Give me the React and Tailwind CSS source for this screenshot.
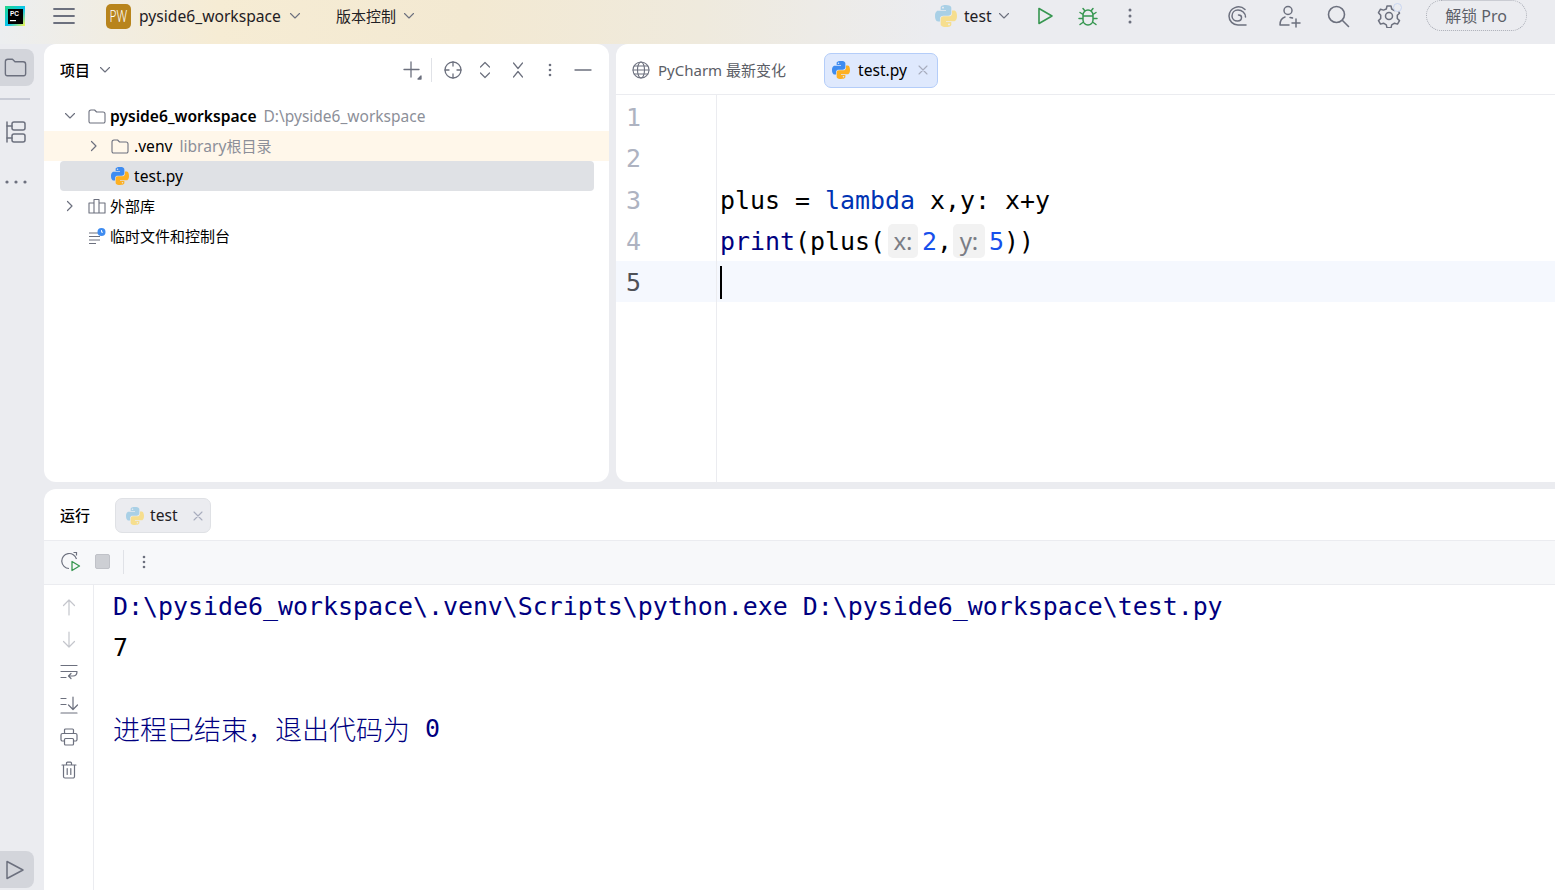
import React from "react";

const UI = { fontFamily: "'Noto Sans', 'Noto Sans CJK SC', sans-serif" };

function Py({ size = 18, faded = false }) {
  return (
    <svg width={size} height={size} viewBox="0 0 24 24" className="shrink-0">
      <path fill={faded ? "#a9d0e6" : "#3f8cf0"} d="M11.914 0C5.82 0 6.2 2.656 6.2 2.656l.007 2.752h5.814v.826H3.9S0 5.789 0 11.969c0 6.18 3.403 5.96 3.403 5.96h2.03v-2.867s-.109-3.42 3.35-3.42h5.766s3.24.052 3.24-3.148V3.202S18.28 0 11.913 0zM8.708 1.85c.578 0 1.046.47 1.046 1.052 0 .581-.468 1.051-1.046 1.051-.579 0-1.046-.47-1.046-1.051 0-.582.467-1.052 1.046-1.052z" />
      <path fill={faded ? "#f6de8e" : "#fdb022"} d="M12.087 24c6.092 0 5.712-2.656 5.712-2.656l-.007-2.752h-5.814v-.826h8.123s3.9.445 3.9-5.735c0-6.18-3.404-5.96-3.404-5.96h-2.03v2.867s.109 3.42-3.35 3.42H9.452s-3.24-.052-3.24 3.148v5.292S5.72 24 12.087 24zm3.206-1.85c-.578 0-1.046-.47-1.046-1.052 0-.581.468-1.051 1.046-1.051.579 0 1.046.47 1.046 1.051 0 .582-.467 1.052-1.046 1.052z" />
    </svg>
  );
}

function I({ w = 20, h = 20, vb, c = "#6c707e", sw = 1.4, children, className = "" }) {
  return (
    <svg width={w} height={h} viewBox={vb || `0 0 ${w} ${h}`} fill="none" stroke={c} strokeWidth={sw} strokeLinecap="round" strokeLinejoin="round" className={"shrink-0 " + className}>
      {children}
    </svg>
  );
}

const Chevron = ({ c = "#6c707e", w = 12 }) => (
  <I w={w} h={8} vb="0 0 12 8" c={c} sw={1.1}><path d="M1.5 1.5 6 6l4.5-4.5" /></I>
);
const ChevronR = () => (
  <I w={8} h={12} vb="0 0 8 12" sw={1.2}><path d="M1.5 1.5 6 6l-4.5 4.5" /></I>
);
const Folder = ({ w = 18, h = 15, c = "#6c707e", sw = 1.1 }) => (
  <I w={w} h={h} vb="0 0 18 15" c={c} sw={sw}>
    <path d="M1 3a2 2 0 0 1 2-2h3.6l2 2H15a2 2 0 0 1 2 2v7.5a1.5 1.5 0 0 1-1.5 1.5h-13A1.5 1.5 0 0 1 1 12.5z" />
  </I>
);
const Close = ({ c = "#a8adbd" }) => (
  <I w={10} h={10} c={c} sw={1.1}><path d="M1 1l8 8M9 1l-8 8" /></I>
);

function Row({ tint, selected, deep, low, chevron, icon, children }) {
  const pl = deep ? (selected ? 25 : 41) : 17;
  return (
    <div className={"h-[30px] flex items-center " + (tint ? "bg-[#fff7ea] " : "") + (selected ? "bg-[#dfe1e5] rounded-[4px] ml-4 mr-[15px] " : "")} style={{ paddingLeft: pl }}>
      <div className="w-[18px] flex items-center justify-center shrink-0">{chevron}</div>
      <div className={"flex items-center shrink-0 " + (deep ? "w-[23px] ml-[8px]" : "w-[22px] ml-[9px]")}>{icon}</div>
      <div className={"flex items-baseline text-[15px] text-[#000] whitespace-nowrap " + (low ? "mt-[2px]" : "")}>{children}</div>
    </div>
  );
}

function Code({ children, className = "" }) {
  return <span className={className}>{children}</span>;
}

const MONO = { fontFamily: "'DejaVu Sans Mono', monospace" };

export default function App() {
  return (
    <div className="w-[1555px] h-[890px] overflow-hidden flex flex-col bg-[#ebecf0]" style={UI}>
      {/* title bar */}
      <div className="h-[44px] shrink-0 flex items-start bg-[linear-gradient(90deg,#eceef0_0%,#f6ecd4_14%,#f3e9d2_30%,#efeadd_45%,#ebecf0_60%)]">
        <div className="h-[32px] w-full flex items-center">
          <svg width="20" height="20" viewBox="0 0 20 20" className="ml-[5px] shrink-0">
            <defs>
              <linearGradient id="pc" x1="0" y1="0" x2="1" y2="1">
                <stop offset="0" stopColor="#21d789" />
                <stop offset="0.55" stopColor="#07c3f2" />
                <stop offset="1" stopColor="#fcf84a" />
              </linearGradient>
            </defs>
            <rect width="20" height="20" fill="url(#pc)" />
            <rect x="3" y="3" width="15" height="15" fill="#000" />
            <text x="5" y="10" fontSize="6.5" fontFamily="Liberation Sans" fontWeight="700" fill="#fff">PC</text>
            <rect x="5" y="14" width="6" height="1.2" fill="#fff" />
          </svg>
          <I w={22} h={18} vb="0 0 22 18" c="#6c707e" sw={1.8} className="ml-[28px]"><path d="M1 2h20M1 9h20M1 16h20" /></I>
          <div className="ml-[31px] w-[25px] h-[25px] rounded-[5px] bg-[#b8841c] flex items-center justify-center text-white text-[16.5px] font-light shrink-0">
            <span className="inline-block scale-x-[0.72]">PW</span>
          </div>
          <span className="ml-[8px] mt-[2px] text-[15.65px] text-[#1f2024]">pyside6_workspace</span>
          <span className="ml-[8px]"><Chevron /></span>
          <span className="ml-[35px] text-[15px] text-[#1f2024]">版本控制</span>
          <span className="ml-[7px]"><Chevron /></span>

          <span className="ml-[520px]"><Py size={22} faded /></span>
          <span className="ml-[7px] mt-[2px] text-[15.65px] text-[#1f2024]">test</span>
          <span className="ml-[5px]"><Chevron w={14} /></span>
          <I w={18} h={20} vb="0 0 18 20" c="#369650" sw={1.6} className="ml-[25px]"><path d="M3 2.5v15L16 10z" /></I>
          <I w={22} h={22} vb="0 0 22 22" c="#369650" sw={1.5} className="ml-[23px]">
            <path d="M6 10a5 5 0 0 1 10 0v5a5 5 0 0 1-10 0zM6 11h10M8 6 6 3.500M14 6l2-2.500M6 13.500H2M16 13.500h4M6 9.500 3 7.500M16 9.500l3-2M6.500 17 3 19.500M15.500 17 19 19.500" />
          </I>
          <svg width="4" height="16" viewBox="0 0 4 16" className="ml-[29px] shrink-0" fill="#6c707e"><circle cx="2" cy="2" r="1.5" /><circle cx="2" cy="8" r="1.5" /><circle cx="2" cy="14" r="1.5" /></svg>
          <I w={22} h={22} vb="0 0 22 22" c="#6c707e" sw={1.5} className="ml-[95px]">
            <path d="M18 4.500A9.500 9.500 0 0 0 2 11c0 5 4 9 9 9h8" />
            <path d="M18.500 12c0-4-3.500-7-7.500-7-3.500 0-6 2.500-6 6 0 3 2.500 5 5.500 5 2.500 0 4-1.500 4-3.500 0-1.500-1.200-2.500-3-2.500" />
          </I>
          <I w={24} h={24} vb="0 0 24 24" c="#6c707e" sw={1.5} className="ml-[29px]">
            <circle cx="10" cy="6.500" r="4" /><path d="M2 21c0-4 1.500-7 5-8M12 13.500c1 0 2 .2 2.500.5M2 21h9M18 15v8M14 19h8" />
          </I>
          <I w={24} h={24} vb="0 0 24 24" c="#6c707e" sw={1.6} className="ml-[24px]">
            <circle cx="10.500" cy="10.500" r="8" /><path d="M16.500 16.500 22.500 22.500" />
          </I>
          <span className="ml-[27px] relative flex">
            <I w={24} h={24} vb="0 0 24 24" c="#6c707e" sw={1.5}>
              <path d="M10 2h4l.7 3 2.800 1.600 3-.9 2 3.500-2.200 2.100v3.200l2.200 2.100-2 3.500-3-.9-2.800 1.600-.7 3h-4l-.7-3-2.800-1.600-3 .9-2-3.500 2.200-2.100v-3.200L1.500 8.700l2-3.500 3 .9L9.300 5z" /><circle cx="12" cy="12" r="3.500" />
            </I>
            <span className="absolute right-[-1px] top-[-1px] w-[9px] h-[9px] rounded-full border border-[#c9d6f2] bg-[#ebecf0]" />
          </span>
          <div className="ml-[25px] w-[101px] h-[31px] -mt-[1px] rounded-full border border-dotted border-[#a9acb5] flex items-center justify-center text-[16px] text-[#5c5f68] shrink-0">解锁 Pro</div>
        </div>
      </div>

      <div className="flex-1 flex min-h-0">
        {/* left strip */}
        <div className="w-[44px] shrink-0 flex flex-col pt-[5px]">
          <div className="w-[34px] h-[37px] rounded-r-[8px] bg-[#d3d5db] flex items-center pl-[4px]">
            <Folder w={23} h={19} sw={1.1} />
          </div>
          <div className="mt-[12px] w-[30px] h-[2px] bg-[#c9ccd6]" />
          <div className="mt-[20px] w-[31px] flex justify-center">
            <I w={22} h={24} vb="0 0 22 24" sw={1.5}><path d="M2 2v20" /><rect x="7" y="2" width="13" height="8" rx="2" /><rect x="7" y="14" width="13" height="8" rx="2" /><path d="M2 6h5M2 18h5" /></I>
          </div>
          <svg width="22" height="4" viewBox="0 0 22 4" className="mt-[36px] ml-[5px]" fill="#6c707e"><circle cx="2" cy="2" r="1.600" /><circle cx="11" cy="2" r="1.600" /><circle cx="20" cy="2" r="1.600" /></svg>
          <div className="mt-auto mb-[2px] w-[34px] h-[37px] rounded-r-[8px] bg-[#d3d5db] flex items-center pl-[5px]">
            <I w={20} h={22} vb="0 0 20 22" sw={1.5}><path d="M2 2.500v17L18 11z" /></I>
          </div>
        </div>

        {/* main */}
        <div className="flex-1 flex flex-col gap-[7px] min-w-0">
          <div className="h-[438px] shrink-0 flex gap-[7px]">
            {/* project panel */}
            <div className="w-[565px] shrink-0 bg-white rounded-[12px] overflow-hidden">
              <div className="h-[57px] flex items-center pl-[16px] pb-[5px]">
                <span className="text-[15px] font-medium text-[#000]">项目</span>
                <span className="ml-[9px]"><Chevron /></span>
                <I w={20} h={20} className="ml-auto" sw={1.3}><path d="M9 2v15M2 9.500h15" /><path d="M19 16v3h-3z" fill="#6c707e" /></I>
                <div className="ml-[9px] w-px h-[24px] bg-[#e0e2e7]" />
                <I w={20} h={20} className="ml-[11px]" sw={1.3}><circle cx="10" cy="10" r="8" /><path d="M10 2v4M10 14v4M2 10h4M14 10h4" /></I>
                <I w={12} h={20} vb="0 0 12 20" className="ml-[16px]" sw={1.2}><path d="M1.500 7 6 2.500 10.500 7M1.500 13 6 17.500 10.500 13" /></I>
                <I w={12} h={20} vb="0 0 12 20" className="ml-[21px]" sw={1.2}><path d="M1.500 3 6 8.500 10.500 3M1.500 17 6 11.500l4.500 5.500" /></I>
                <svg width="4" height="14" viewBox="0 0 4 14" className="ml-[24px] shrink-0" fill="#6c707e"><circle cx="2" cy="2" r="1.300" /><circle cx="2" cy="7" r="1.300" /><circle cx="2" cy="12" r="1.300" /></svg>
                <I w={18} h={4} vb="0 0 18 4" className="ml-[22px] mr-[17px]" sw={1.3}><path d="M1 2h16" /></I>
              </div>
              {/* tree */}
              <Row low chevron={<Chevron />} icon={<Folder />}>
                <span className="font-semibold text-[15.6px]">pyside6_workspace</span>
                <span className="ml-[7px] text-[15.5px] text-[#8c8f99]">D:\pyside6_workspace</span>
              </Row>
              <Row low tint deep chevron={<ChevronR />} icon={<Folder />}>
                <span className="text-[15.6px]">.venv</span>
                <span className="ml-[7px] text-[15.6px] text-[#8c8f99]">library</span>
                <span className="text-[#8c8f99]">根目录</span>
              </Row>
              <Row low selected deep icon={<Py />}>
                <span className="text-[15.6px]">test.py</span>
              </Row>
              <Row chevron={<ChevronR />} icon={
                <I w={18} h={16} vb="0 0 18 16" sw={1.1}><path d="M1 5h5v10H1zM6 1.500h5V15H6zM11 5h6v10h-6z" /></I>
              }>
                <span>外部库</span>
              </Row>
              <Row icon={
                <svg width="18" height="17" viewBox="0 0 18 17" className="shrink-0">
                  <path d="M1 5h9M1 8.500h11M1 12h11M1 15.500h7" stroke="#6c707e" strokeWidth="1.200" fill="none" />
                  <circle cx="13.500" cy="4" r="4" fill="#3f8cf0" />
                  <path d="M13.500 2v2.200h1.500" stroke="#fff" strokeWidth="0.900" fill="none" />
                </svg>
              }>
                <span>临时文件和控制台</span>
              </Row>
            </div>

            {/* editor */}
            <div className="flex-1 min-w-0 bg-white rounded-tl-[12px] rounded-bl-[12px] overflow-hidden flex flex-col">
              <div className="h-[51px] shrink-0 border-b border-[#ebecf0] flex items-center pl-[16px] pt-[2px]">
                <I w={18} h={18} sw={1.1} c="#6c707e"><circle cx="9" cy="9" r="8" /><ellipse cx="9" cy="9" rx="3.500" ry="8" /><path d="M1 9h16M2 5h14M2 13h14" /></I>
                <span className="ml-[8px] w-[130px] text-[15px] text-[#5b5e66] whitespace-nowrap">PyCharm 最新变化</span>
                <div className="ml-[36px] w-[114px] h-[35px] rounded-[7px] bg-[#dfe9fd] border border-[#b4cdf9] flex items-center pl-[7px]">
                  <Py />
                  <span className="ml-[8px] mt-[2px] w-[51px] text-[15.6px] text-[#000]">test.py</span>
                  <span className="ml-[9px] flex"><Close /></span>
                </div>
              </div>
              <div className="flex-1 relative pt-[1px]" style={MONO}>
                <div className="absolute left-[100px] top-0 bottom-0 w-px bg-[#ebecf0]" />
                {[
                  [1, null],
                  [2, null],
                  [3, (
                    <>
                      <Code>plus = </Code><Code className="text-[#0033b3]">lambda</Code><Code> x,y: x+y</Code>
                    </>
                  )],
                  [4, (
                    <span className="flex items-center">
                      <Code className="text-[#000080]">print</Code><Code>(plus(</Code>
                      <span className="ml-[3px] mr-[4px] w-[30px] h-[34px] -mt-[3px] rounded-[5px] bg-[#f2f2f2] text-[#7a7d85] flex items-center justify-center text-[24px]" style={UI}>x:</span>
                      <Code className="text-[#1750eb]">2</Code><Code>,</Code>
                      <span className="ml-[1px] mr-[4px] w-[32px] h-[34px] -mt-[3px] rounded-[5px] bg-[#f2f2f2] text-[#7a7d85] flex items-center justify-center text-[24px]" style={UI}>y:</span>
                      <Code className="text-[#1750eb]">5</Code><Code>))</Code>
                    </span>
                  )],
                  [5, <span className="inline-block w-[2px] h-[33px] bg-black align-middle -mt-[3px]" />],
                ].map(([n, c]) => (
                  <div key={n} className={"h-[41.25px] flex items-center pt-[4px] text-[24.92px] leading-none whitespace-pre " + (n === 5 ? "bg-[#f5f8fe]" : "")}>
                    <span className={"w-[104px] pl-[10px] shrink-0 " + (n === 5 ? "text-[#4f5157]" : "text-[#aeb3c1]")}>{n}</span>
                    <span className="text-black">{c}</span>
                  </div>
                ))}
              </div>
            </div>
          </div>

          {/* run panel */}
          <div className="flex-1 min-h-0 bg-white rounded-tl-[12px] overflow-hidden flex flex-col">
            <div className="h-[52px] shrink-0 border-b border-[#ebecf0] flex items-center pl-[16px] pt-[2px]">
              <span className="text-[15px] font-medium text-[#000]">运行</span>
              <div className="ml-[25px] w-[96px] h-[35px] rounded-[7px] bg-[#ebecf0] border border-[#dfe1e5] flex items-center pl-[10px]">
                <Py faded />
                <span className="ml-[6px] w-[28px] text-[15.6px] text-[#1f2024]">test</span>
                <span className="ml-[15px] flex"><Close /></span>
              </div>
            </div>
            <div className="h-[44px] shrink-0 border-b border-[#ebecf0] bg-[#f7f8fa] flex items-center pl-[17px] pb-[2px]">
              <svg width="20" height="21" viewBox="0 0 20 21" fill="none" className="shrink-0">
                <path d="M8 17.500A7.500 7.500 0 1 1 15.500 8M12.500 1.500l3 0 0 3" stroke="#6c707e" strokeWidth="1.200" />
                <path d="M11 10.500v9l7.500-4.500z" stroke="#369650" strokeWidth="1.300" strokeLinejoin="round" />
              </svg>
              <div className="ml-[14px] w-[15px] h-[15px] rounded-[2px] bg-[#cdcfd4] border border-[#c0c2c8]" />
              <div className="ml-[13px] w-px h-[24px] bg-[#e0e2e7]" />
              <svg width="4" height="14" viewBox="0 0 4 14" className="ml-[18px] shrink-0" fill="#6c707e"><circle cx="2" cy="2" r="1.300" /><circle cx="2" cy="7" r="1.300" /><circle cx="2" cy="12" r="1.300" /></svg>
            </div>
            <div className="flex-1 flex min-h-0">
              <div className="w-[50px] shrink-0 border-r border-[#ebecf0] flex flex-col items-center pt-[12px] gap-[12.6px]">
                <I w={20} h={20} c="#c4c6cc" sw={1.2}><path d="M10 18V3M4.500 8.500 10 3l5.500 5.500" /></I>
                <I w={20} h={20} c="#c4c6cc" sw={1.2}><path d="M10 2v15M4.500 11.500 10 17l5.500-5.500" /></I>
                <I w={20} h={20} sw={1.2}><path d="M2 3.500h16M2 9.500h16M2 15.500h5M18 9.500c0 3-1 4.500-4 4.500h-4M12 11.500 9.500 14l2.500 2.500" /></I>
                <I w={20} h={20} sw={1.2}><path d="M2 3.500h5M2 9.500h5M2 18h16M14 2v12M9.500 10l4.500 4.500 4.500-4.500" /></I>
                <I w={20} h={20} sw={1.2}><rect x="5.500" y="2" width="9" height="4.500" rx="1" /><path d="M5 14H3.500A1.500 1.500 0 0 1 2 12.500V8a1.500 1.500 0 0 1 1.500-1.500h13A1.500 1.500 0 0 1 18 8v4.500a1.500 1.500 0 0 1-1.500 1.500H15" /><rect x="5.500" y="11.500" width="9" height="6.500" rx="1" /></I>
                <I w={20} h={20} sw={1.2}><path d="M3 5h14M7.500 5V3.200a1 1 0 0 1 1-1h3a1 1 0 0 1 1 1V5M4.500 5v11.500a1.500 1.500 0 0 0 1.500 1.500h8a1.500 1.500 0 0 0 1.500-1.500V5M8.200 8.500v6M11.800 8.500v6" /></I>
              </div>
              <div className="flex-1 pl-[19px] pt-[1px] text-[24.92px] leading-[41px] whitespace-pre" style={MONO}>
                <div className="text-[#000080]">{"D:\\pyside6_workspace\\.venv\\Scripts\\python.exe D:\\pyside6_workspace\\test.py"}</div>
                <div className="text-black">7</div>
                <div className="h-[41px]" />
                <div className="h-[41px] -mt-[1px] flex items-center text-[#000080]">
                  <span className="text-[27px] font-light leading-[41px]" style={{ fontFamily: "'Noto Sans CJK SC', sans-serif" }}>进程已结束，退出代码为</span>
                  <span> 0</span>
                </div>
              </div>
            </div>
          </div>
        </div>
      </div>
    </div>
  );
}
